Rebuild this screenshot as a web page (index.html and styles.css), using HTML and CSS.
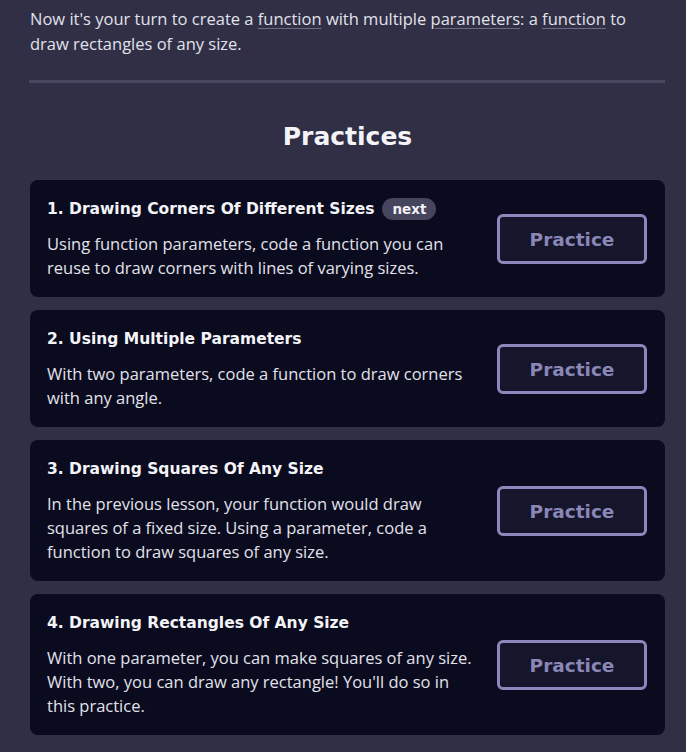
FILE: index.html
```html
<!DOCTYPE html>
<html>
<head>
<meta charset="utf-8">
<link rel="stylesheet" href="styles.css">
</head>
<body>
<div class="page">
  <p class="intro">Now it's your turn to create a <a class="term">function</a> with multiple <a class="term">parameters</a>: a <a class="term">function</a> to draw rectangles of any size.</p>
  <hr class="rule">
  <h2 class="section-title">Practices</h2>
  <div class="cards">
    <div class="card">
      <div class="card-text">
        <h3 class="card-title">1. Drawing Corners Of Different Sizes <span class="badge">next</span></h3>
        <p class="card-desc">Using function parameters, code a function you can reuse to draw corners with lines of varying sizes.</p>
      </div>
      <button class="btn">Practice</button>
    </div>
    <div class="card">
      <div class="card-text">
        <h3 class="card-title">2. Using Multiple Parameters</h3>
        <p class="card-desc">With two parameters, code a function to draw corners with any angle.</p>
      </div>
      <button class="btn">Practice</button>
    </div>
    <div class="card">
      <div class="card-text">
        <h3 class="card-title">3. Drawing Squares Of Any Size</h3>
        <p class="card-desc">In the previous lesson, your function would draw squares of a fixed size. Using a parameter, code a function to draw squares of any size.</p>
      </div>
      <button class="btn">Practice</button>
    </div>
    <div class="card">
      <div class="card-text">
        <h3 class="card-title">4. Drawing Rectangles Of Any Size</h3>
        <p class="card-desc">With one parameter, you can make squares of any size. With two, you can draw any rectangle! You'll do so in this practice.</p>
      </div>
      <button class="btn">Practice</button>
    </div>
  </div>
</div>
</body>
</html>
```
FILE: styles.css
```css
html, body {
  margin: 0;
  padding: 0;
  background: #302f46;
}
.page {
  padding: 6px 21px 20px 30px;
  font-family: "Open Sans", "Liberation Sans", sans-serif;
  color: #e2e2ea;
}
.intro {
  margin: 0;
  font-size: 16.5px;
  line-height: 25px;
}
.term {
  color: inherit;
  text-decoration: underline;
  text-decoration-color: #6c6b85;
  text-underline-offset: 3px;
}
.rule {
  border: none;
  height: 3px;
  background: #48475f;
  margin: 24px 0 0 -1px;
}
.section-title {
  margin: 0;
  padding: 38px 0 27px;
  text-align: center;
  font-family: "DejaVu Sans", sans-serif;
  font-weight: bold;
  font-size: 25px;
  line-height: 32px;
  color: #f4f4f8;
}
.cards {
  display: flex;
  flex-direction: column;
  gap: 13px;
}
.card {
  background: #0b0b1f;
  border-radius: 8px;
  padding: 18px 18px 17px 17px;
  display: flex;
  align-items: center;
  gap: 20px;
}
.card-text {
  flex: 1;
}
.card-title {
  margin: 0;
  font-family: "DejaVu Sans", sans-serif;
  font-weight: bold;
  font-size: 15.5px;
  line-height: 22px;
  color: #f4f4f8;
  display: flex;
  align-items: center;
  gap: 8px;
}
.badge {
  background: #46455e;
  color: #f0f0f5;
  font-size: 13.5px;
  line-height: 22px;
  padding: 0 10px;
  border-radius: 11px;
}
.card-desc {
  margin: 12px 0 0;
  font-size: 16.5px;
  line-height: 24px;
}
.btn {
  width: 150px;
  height: 50px;
  flex: none;
  background: #15152b;
  border: 3px solid #8c87bd;
  border-radius: 6px;
  color: #8a86b5;
  font-family: "DejaVu Sans", sans-serif;
  font-weight: bold;
  font-size: 18.5px;
}
```
